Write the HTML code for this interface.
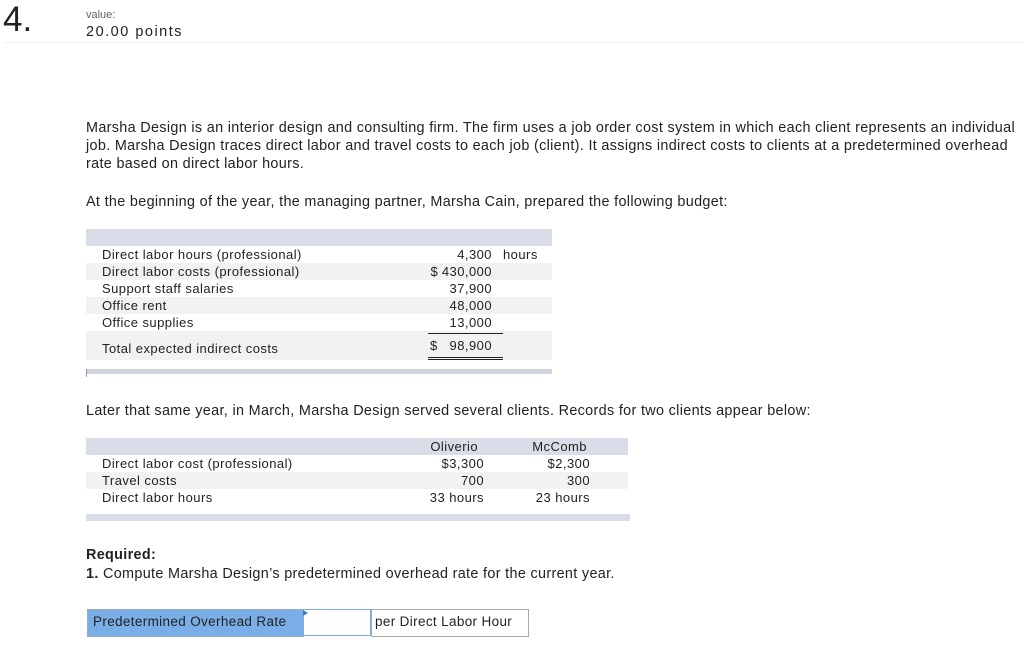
<!DOCTYPE html>
<html><head><style>
body{margin:0;width:1024px;height:646px;background:#fff;font-family:"Liberation Sans",Arial,sans-serif;color:#222;position:relative;overflow:hidden}
.a{position:absolute;white-space:nowrap}
p.t{position:absolute;margin:0;font-size:14.4px;letter-spacing:0.33px;line-height:18px;left:86px;width:960px;white-space:nowrap}
.r{position:absolute;font-size:13px;letter-spacing:0.45px;line-height:17px}
</style></head><body>
<div class="a" style="left:3px;top:2px;font-size:35px;line-height:36px;color:#222">4.</div>
<div class="a" style="left:86px;top:9px;font-size:11px;color:#666">value:</div>
<div class="a" style="left:86px;top:24px;font-size:14.5px;letter-spacing:1.5px;color:#222">20.00 points</div>
<div class="a" style="left:5px;top:42px;width:1019px;height:1px;background:#eee"></div>

<p class="t" style="top:119px">Marsha Design is an interior design and consulting firm. The firm uses a job order cost system in which each client represents an individual<br>job. Marsha Design traces direct labor and travel costs to each job (client). It assigns indirect costs to clients at a predetermined overhead<br>rate based on direct labor hours.</p>
<p class="t" style="top:193px">At the beginning of the year, the managing partner, Marsha Cain, prepared the following budget:</p>

<div class="a" style="left:86px;top:229px;width:466px;height:17px;background:#d9dde8"></div>
<div class="a" style="left:86px;top:263px;width:466px;height:17px;background:#f2f2f2"></div>
<div class="a" style="left:86px;top:297px;width:466px;height:17px;background:#f2f2f2"></div>
<div class="a" style="left:86px;top:331px;width:466px;height:29px;background:#f2f2f2"></div>
<div class="a" style="left:86px;top:369px;width:466px;height:5px;background:#d0d4de"></div>
<div class="a" style="left:86px;top:369px;width:1px;height:8px;background:#999"></div>
<div class="r" style="left:102px;top:246px">Direct labor hours (professional)<br>Direct labor costs (professional)<br>Support staff salaries<br>Office rent<br>Office supplies</div>
<div class="r" style="left:102px;top:340px">Total expected indirect costs</div>
<div class="r" style="left:410px;top:246px;width:82px;text-align:right">4,300<br><span style="letter-spacing:0">$</span> 430,000<br>37,900<br>48,000<br>13,000</div>
<div class="r" style="left:503px;top:246px">hours</div>
<div class="a" style="left:428px;top:333px;width:75px;height:1px;background:#222"></div>
<div class="r" style="left:430px;top:337px">$</div>
<div class="r" style="left:440px;top:337px;width:52px;text-align:right">98,900</div>
<div class="a" style="left:428px;top:357px;width:75px;height:1px;background:#222"></div>
<div class="a" style="left:428px;top:359px;width:75px;height:1px;background:#222"></div>

<p class="t" style="top:402px">Later that same year, in March, Marsha Design served several clients. Records for two clients appear below:</p>

<div class="a" style="left:86px;top:438px;width:542px;height:17px;background:#d9dde8"></div>
<div class="a" style="left:86px;top:472px;width:542px;height:17px;background:#f2f2f2"></div>
<div class="a" style="left:86px;top:514px;width:544px;height:7px;background:#d9dde8"></div>
<div class="r" style="left:102px;top:455px">Direct labor cost (professional)<br>Travel costs<br>Direct labor hours</div>
<div class="r" style="left:410px;top:438px;width:74px;text-align:right"><span style="margin-right:6px">Oliverio</span><br>$3,300<br>700<br>33 hours</div>
<div class="r" style="left:510px;top:438px;width:80px;text-align:right"><span style="margin-right:3px">McComb</span><br>$2,300<br>300<br>23 hours</div>

<div class="a" style="left:86px;top:547px;font-size:14.4px;letter-spacing:0.33px;font-weight:bold">Required:</div>
<div class="a" style="left:86px;top:566px;font-size:14.4px;letter-spacing:0.33px"><b>1.</b> Compute Marsha Design’s predetermined overhead rate for the current year.</div>

<div class="a" style="left:87px;top:609px;width:215px;height:26px;background:#7aaee6;border:1px solid #9ab"></div>
<div class="a" style="left:93px;top:614px;font-size:13.5px;letter-spacing:0.35px">Predetermined Overhead Rate</div>
<div class="a" style="left:303px;top:609px;width:66px;height:25px;border:1px solid #7aaee6;background:#fff"></div>
<div class="a" style="left:303px;top:610px;width:0;height:0;border-left:5px solid #3a7bd5;border-top:3px solid transparent;border-bottom:3px solid transparent"></div>
<div class="a" style="left:371px;top:609px;width:156px;height:26px;border:1px solid #aaa;background:#fff"></div>
<div class="a" style="left:375px;top:614px;font-size:13.5px;letter-spacing:0.35px">per Direct Labor Hour</div>
</body></html>
